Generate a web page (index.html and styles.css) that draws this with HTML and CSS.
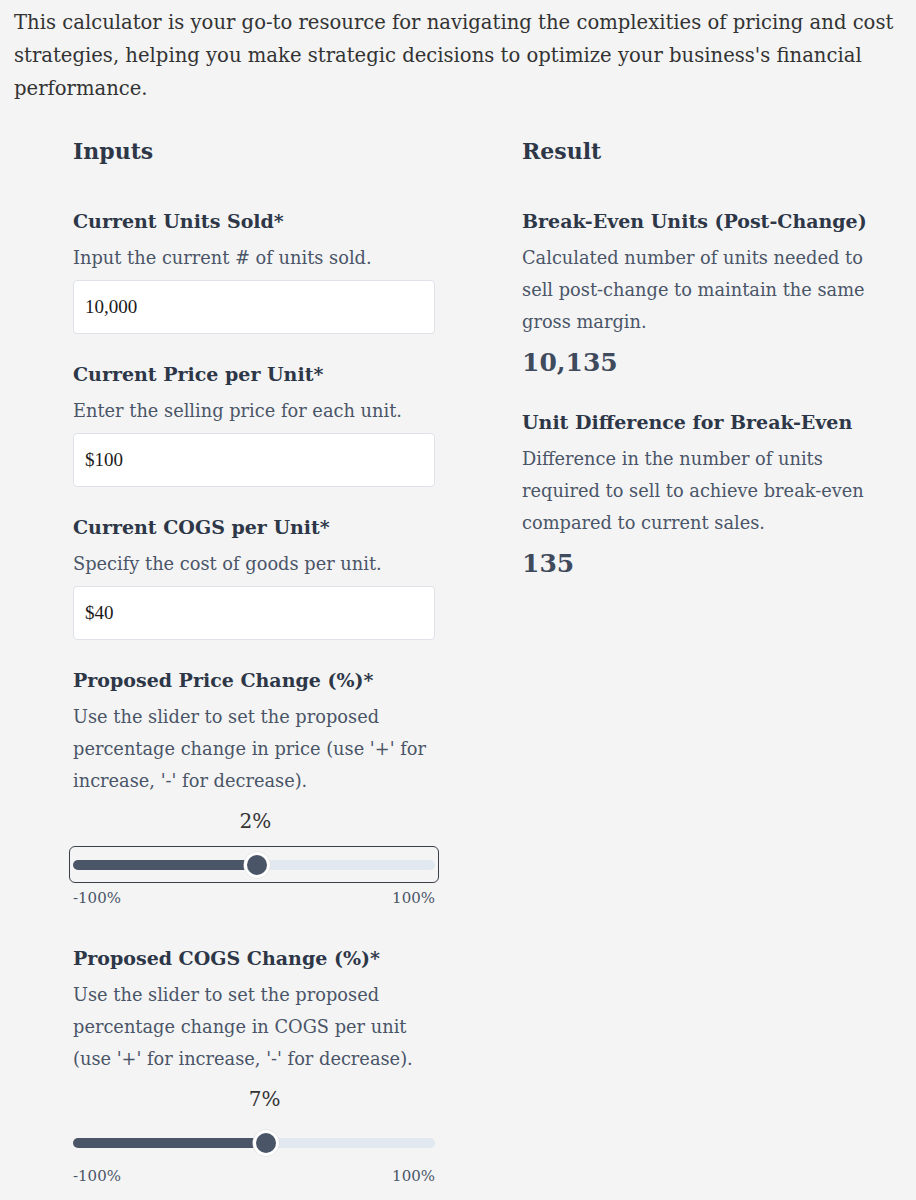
FILE: index.html
```html
<!DOCTYPE html>
<html lang="en">
<head>
  <meta charset="UTF-8" />
  <title>Break-Even Price Change Calculator</title>
  <link rel="stylesheet" href="styles.css">
</head>
<body>
  <p class="intro">This calculator is your go-to resource for navigating the complexities of pricing and cost strategies, helping you make strategic decisions to optimize your business's financial performance.</p>

  <div class="calc">
    <section class="col">
      <h2>Inputs</h2>

      <div class="field">
        <label for="units">Current Units Sold*</label>
        <p class="hint">Input the current # of units sold.</p>
        <input id="units" class="text-input" type="text" value="10,000">
      </div>

      <div class="field">
        <label for="price">Current Price per Unit*</label>
        <p class="hint">Enter the selling price for each unit.</p>
        <input id="price" class="text-input" type="text" value="$100">
      </div>

      <div class="field">
        <label for="cogs">Current COGS per Unit*</label>
        <p class="hint">Specify the cost of goods per unit.</p>
        <input id="cogs" class="text-input" type="text" value="$40">
      </div>

      <div class="field slider-field">
        <label for="priceChange">Proposed Price Change (%)*</label>
        <p class="hint">Use the slider to set the proposed percentage change in price (use '+' for increase, '-' for decrease).</p>
        <div class="slider">
          <output class="slider-value" style="padding-left: 51%">2%</output>
          <div class="slider-box focused">
            <input id="priceChange" type="range" min="-100" max="100" value="2" style="--fill: 51%">
          </div>
          <div class="slider-range"><span>-100%</span><span>100%</span></div>
        </div>
      </div>

      <div class="field slider-field">
        <label for="cogsChange">Proposed COGS Change (%)*</label>
        <p class="hint">Use the slider to set the proposed percentage change in COGS per unit (use '+' for increase, '-' for decrease).</p>
        <div class="slider">
          <output class="slider-value" style="padding-left: 53.5%">7%</output>
          <div class="slider-box">
            <input id="cogsChange" type="range" min="-100" max="100" value="7" style="--fill: 53.5%">
          </div>
          <div class="slider-range"><span>-100%</span><span>100%</span></div>
        </div>
      </div>
    </section>

    <section class="col">
      <h2>Result</h2>

      <div class="result">
        <h3>Break-Even Units (Post-Change)</h3>
        <p class="hint">Calculated number of units needed to sell post-change to maintain the same gross margin.</p>
        <div class="big-number">10,135</div>
      </div>

      <div class="result">
        <h3>Unit Difference for Break-Even</h3>
        <p class="hint">Difference in the number of units required to sell to achieve break-even compared to current sales.</p>
        <div class="big-number">135</div>
      </div>
    </section>
  </div>
</body>
</html>
```

FILE: styles.css
```css
body {
  margin: 0;
  padding: 6px 14px 0;
  background: #f4f4f4;
  font-family: 'DejaVu Serif', 'Liberation Serif', serif;
  color: #333;
}

.intro {
  margin: 0;
  font-size: 19.6px;
  line-height: 33px;
  color: #333;
}

.calc {
  display: grid;
  grid-template-columns: 362px 362px;
  column-gap: 87px;
  padding-left: 59px;
  margin-top: 30px;
}

h2 {
  margin: 0 0 38px;
  font-size: 22px;
  line-height: 32px;
  font-weight: bold;
  color: #2d3748;
}

.field {
  margin-bottom: 24px;
}

.slider-field {
  margin-bottom: 34px;
}

label,
h3 {
  display: block;
  margin: 0 0 5px;
  font-size: 19px;
  line-height: 32px;
  font-weight: bold;
  color: #2d3748;
}

.hint {
  margin: 0;
  font-size: 17.8px;
  line-height: 32px;
  color: #4a5568;
}

.text-input {
  box-sizing: border-box;
  display: block;
  width: 100%;
  height: 54px;
  margin-top: 6px;
  padding: 0 11px;
  border: 1px solid #dfe2e8;
  border-radius: 4px;
  background: #fff;
  font-family: 'Liberation Serif', serif;
  font-size: 19px;
  color: #1a1a1a;
}

.slider {
  margin-top: 8px;
}

.slider-value {
  display: block;
  box-sizing: border-box;
  width: 100%;
  text-indent: -0.9em;
  font-size: 20px;
  line-height: 32px;
  color: #333;
}

.slider-box {
  margin: 9px -4px 0;
  padding: 4px 3px;
  border: 1px solid transparent;
  border-radius: 6px;
}

.slider-box.focused {
  border-color: #3a3f4a;
}

input[type=range] {
  -webkit-appearance: none;
  appearance: none;
  display: block;
  width: 100%;
  height: 27px;
  margin: 0;
  background: transparent;
}

input[type=range]::-webkit-slider-runnable-track {
  height: 10px;
  border-radius: 5px;
  background: linear-gradient(to right, #4a5568 var(--fill), #e2e8f0 var(--fill));
}

input[type=range]::-webkit-slider-thumb {
  -webkit-appearance: none;
  width: 26px;
  height: 26px;
  margin-top: -8px;
  border-radius: 50%;
  background: #4a5568;
  border: 3px solid #fff;
  box-sizing: border-box;
  box-shadow: 0 0 0 0.5px #dcdcdc;
}

.slider-range {
  display: flex;
  justify-content: space-between;
  margin-top: 5px;
  font-size: 15px;
  line-height: 20px;
  color: #4a5568;
}

.result {
  margin-bottom: 23px;
}

.big-number {
  margin-top: 5px;
  font-size: 25px;
  line-height: 40px;
  font-weight: bold;
  color: #3f4a5c;
}
```
